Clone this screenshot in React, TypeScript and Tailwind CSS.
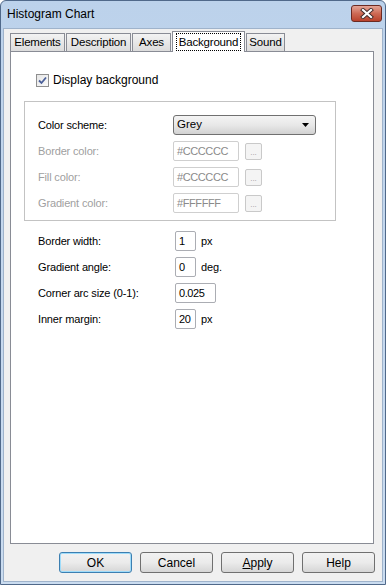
import React from "react";

const font = { fontFamily: '"Liberation Sans", Arial, sans-serif' };

function Tab({ label, w, active }: { label: string; w: string; active?: boolean }) {
  if (active) {
    return (
      <div
        className={`${w} h-[21px] relative z-10 -mb-px bg-white border border-[#898c95] border-b-0 flex items-start justify-center pt-[1px]`}
      >
        <span className="px-[2px] leading-[16px] border border-dotted border-black text-[11.5px] tracking-[-0.2px]">{label}</span>
      </div>
    );
  }
  return (
    <div
      className={`${w} h-[18px] bg-gradient-to-b from-[#f3f3f3] to-[#dcdcdc] border border-[#898c95] border-b-0 flex items-center justify-center text-[11.5px] tracking-[-0.2px]`}
    >
      {label}
    </div>
  );
}

function Field({ value, w, disabled }: { value: string; w: string; disabled?: boolean }) {
  return (
    <div
      className={`${w} h-[20px] bg-white border rounded-[2px] flex items-center pl-[3px] text-[11px] tracking-[-0.4px] ${
        disabled ? "border-[#cfcfcf] text-[#8a8a8a]" : "border-[#abadb3] text-black"
      }`}
    >
      {value}
    </div>
  );
}

function Dots() {
  return (
    <div className="w-[17px] h-[17px] ml-[6px] border border-[#c9c9c9] rounded-[2px] bg-[#f4f4f4] flex items-end justify-center pb-[2px] text-[8px] leading-none text-[#9a9a9a]">
      ...
    </div>
  );
}

function Btn({ children, primary }: { children: React.ReactNode; primary?: boolean }) {
  return (
    <div
      className={`w-[73px] h-[21px] rounded-[3px] border flex items-center justify-center text-[12px] bg-gradient-to-b from-[#f2f2f2] via-[#ebebeb] to-[#d6d6d6] ${
        primary ? "border-[#3c7fb1] shadow-[inset_0_0_0_1px_#9fdcfa]" : "border-[#707070]"
      }`}
    >
      {children}
    </div>
  );
}

function Label({ children, disabled }: { children: React.ReactNode; disabled?: boolean }) {
  return (
    <span className={`text-[11px] tracking-[-0.15px] ${disabled ? "text-[#a0a0a0]" : "text-black"}`}>{children}</span>
  );
}

export default function App() {
  return (
    <div
      style={font}
      className="w-[386px] h-[585px] bg-gradient-to-b from-[#bcd2eb] via-[#c5d8ee] to-[#cadcf0] border border-[#50698a] rounded-t-[6px] flex flex-col text-black"
    >
      {/* title bar */}
      <div className="h-[27px] flex items-start pl-[6px] pr-[3px]">
        <span className="mt-[6px] text-[12px] leading-[15px]">Histogram Chart</span>
        <div className="ml-auto mt-[4px] w-[31px] h-[17px] rounded-[3px] border border-[#6b2a22] bg-gradient-to-b from-[#e3a597] via-[#cd6a55] to-[#b9412b] flex items-center justify-center">
          <svg width="14" height="11" viewBox="0 0 14 11">
            <path d="M3 2 L11 9 M11 2 L3 9" stroke="#3e2a2a" strokeWidth="4" strokeLinecap="square" />
            <path d="M3 2 L11 9 M11 2 L3 9" stroke="#ffffff" strokeWidth="2.2" strokeLinecap="square" />
          </svg>
        </div>
      </div>

      {/* body */}
      <div className="flex-1 mx-[2px] mb-[2px] bg-[#f0f0f0] border border-[#9fb3cb] flex flex-col">
        <div className="flex items-end ml-[6px] mt-[2px] gap-px">
          <Tab label="Elements" w="w-[55px]" />
          <Tab label="Description" w="w-[65px]" />
          <Tab label="Axes" w="w-[39px]" />
          <Tab label="Background" w="w-[73px]" active />
          <Tab label="Sound" w="w-[39px]" />
        </div>

        <div className="ml-[6px] mr-[8px] h-[493px] bg-white border border-[#898c95] text-[12px]">
          <div className="flex items-center ml-[25px] mt-[19px]">
            <div className="w-[13px] h-[13px] border border-[#8f8f8f] bg-gradient-to-br from-[#e6e6e6] to-[#fafafa] flex items-center justify-center">
              <svg width="9" height="9" viewBox="0 0 9 9">
                <path d="M1 4.5 L3.5 7 L8 1.5" fill="none" stroke="#4a5f99" strokeWidth="1.8" />
              </svg>
            </div>
            <span className="ml-[4px]">Display background</span>
          </div>

          <div className="ml-[13px] mt-[12px] w-[312px] h-[120px] border border-[#c3c3c3] pl-[13px] pt-[13px]">
            <div className="flex items-center h-[20px]">
              <span className="w-[135px]"><Label>Color scheme:</Label></span>
              <div className="w-[143px] h-[20px] rounded-[3px] border border-[#707070] bg-gradient-to-b from-[#f4f4f4] via-[#e8e8e8] to-[#d2d2d2] flex items-center pl-[3px] pr-[6px]">
                <span className="text-[11.5px]">Grey</span>
                <svg className="ml-auto" width="7" height="4" viewBox="0 0 7 4">
                  <path d="M0 0 H7 L3.5 4 Z" fill="#000" />
                </svg>
              </div>
            </div>
            <div className="flex items-center h-[20px] mt-[6px]">
              <span className="w-[135px]"><Label disabled>Border color:</Label></span>
              <Field value="#CCCCCC" w="w-[66px]" disabled />
              <Dots />
            </div>
            <div className="flex items-center h-[20px] mt-[6px]">
              <span className="w-[135px]"><Label disabled>Fill color:</Label></span>
              <Field value="#CCCCCC" w="w-[66px]" disabled />
              <Dots />
            </div>
            <div className="flex items-center h-[20px] mt-[6px]">
              <span className="w-[135px]"><Label disabled>Gradient color:</Label></span>
              <Field value="#FFFFFF" w="w-[66px]" disabled />
              <Dots />
            </div>
          </div>

          <div className="ml-[27px] mt-[10px] flex flex-col gap-[6px]">
            <div className="flex items-center h-[20px]">
              <span className="w-[137px]"><Label>Border width:</Label></span>
              <Field value="1" w="w-[21px]" />
              <span className="ml-[5px]"><Label>px</Label></span>
            </div>
            <div className="flex items-center h-[20px]">
              <span className="w-[137px]"><Label>Gradient angle:</Label></span>
              <Field value="0" w="w-[21px]" />
              <span className="ml-[5px]"><Label>deg.</Label></span>
            </div>
            <div className="flex items-center h-[20px]">
              <span className="w-[137px]"><Label>Corner arc size (0-1):</Label></span>
              <Field value="0.025" w="w-[41px]" />
            </div>
            <div className="flex items-center h-[20px]">
              <span className="w-[137px]"><Label>Inner margin:</Label></span>
              <Field value="20" w="w-[21px]" />
              <span className="ml-[5px]"><Label>px</Label></span>
            </div>
          </div>
        </div>

        <div className="flex justify-end gap-[8px] mr-[7px] mt-[8px]">
          <Btn primary>OK</Btn>
          <Btn>Cancel</Btn>
          <Btn>
            <span>
              <span className="underline">A</span>pply
            </span>
          </Btn>
          <Btn>Help</Btn>
        </div>
      </div>
    </div>
  );
}
